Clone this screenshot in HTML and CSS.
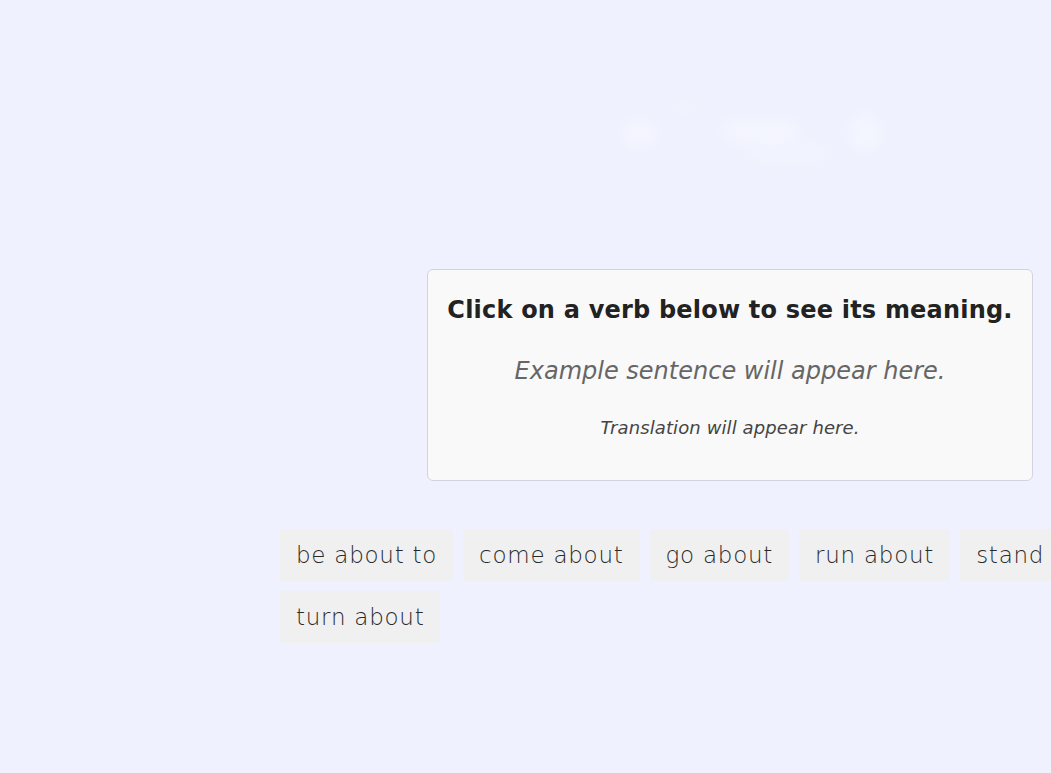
FILE: index.html
```html
<!DOCTYPE html>
<html lang="en">
<head>
<meta charset="utf-8">
<title>Phrasal verbs: about</title>
<link rel="stylesheet" href="styles.css">
</head>
<body>
<div class="page">
  <header class="hero">
    <div class="ghost" aria-hidden="true">
      <span class="blob b1"></span>
      <span class="blob b2"></span>
      <span class="blob b3"></span>
      <span class="blob b4"></span>
      <span class="blob b5"></span>
    </div>
  </header>
  <section class="card">
    <h2 class="card-title">Click on a verb below to see its meaning.</h2>
    <p class="example">Example sentence will appear here.</p>
    <p class="translation">Translation will appear here.</p>
  </section>
  <div class="verbs">
    <button class="verb">be about to</button>
    <button class="verb">come about</button>
    <button class="verb">go about</button>
    <button class="verb">run about</button>
    <button class="verb">stand about</button>
    <button class="verb">turn about</button>
  </div>
</div>
</body>
</html>
```

FILE: styles.css
```css
html, body {
  margin: 0;
  padding: 0;
  background: #eff1fe;
}
body {
  font-family: "DejaVu Sans", "Noto Sans", sans-serif;
  color: #222;
  overflow: hidden;
}
.page {
  width: 900px;
  margin-left: 280px;
}
.hero {
  height: 269px;
  display: flex;
  justify-content: center;
}
.ghost {
  position: relative;
  width: 290px;
  height: 90px;
  margin-top: 90px;
  margin-left: 40px;
  filter: blur(7px);
  opacity: 0.35;
}
.blob {
  position: absolute;
  background: #ffffff;
  border-radius: 50%;
}
.b1 { left: 20px; top: 30px; width: 30px; height: 26px; }
.b2 { left: 55px; top: 14px; width: 45px; height: 6px; opacity: .6; }
.b3 { left: 115px; top: 30px; width: 80px; height: 22px; }
.b4 { left: 140px; top: 52px; width: 90px; height: 22px; opacity: .5; }
.b5 { left: 245px; top: 25px; width: 30px; height: 35px; }

.card {
  width: 606px;
  margin: 0 auto;
  box-sizing: border-box;
  background: #f9f9fa;
  border: 1px solid #d3d3e0;
  border-radius: 6px;
  padding: 24px 10px 40px;
  text-align: center;
}
.card-title {
  margin: 0;
  font-size: 24px;
  line-height: 32px;
  font-weight: 700;
  color: #222;
  letter-spacing: 0.2px;
}
.example {
  margin: 29px 0 0;
  font-size: 24px;
  line-height: 32px;
  font-style: italic;
  font-weight: 300;
  color: #666;
}
.translation {
  margin: 29px 0 0;
  font-size: 18px;
  line-height: 24px;
  font-style: italic;
  font-weight: 400;
  color: #444;
  letter-spacing: 0.1px;
}
.verbs {
  margin-top: 48px;
  display: flex;
  flex-wrap: wrap;
  gap: 10px;
  width: 900px;
}
.verb {
  font-family: "DejaVu Sans", "Noto Sans", sans-serif;
  font-size: 23px;
  font-weight: 300;
  letter-spacing: 0.75px;
  color: #2a2a2a;
  background: #f0f0f0;
  border: none;
  border-radius: 3px;
  height: 52px;
  padding: 0 16px;
  cursor: pointer;
}
```
